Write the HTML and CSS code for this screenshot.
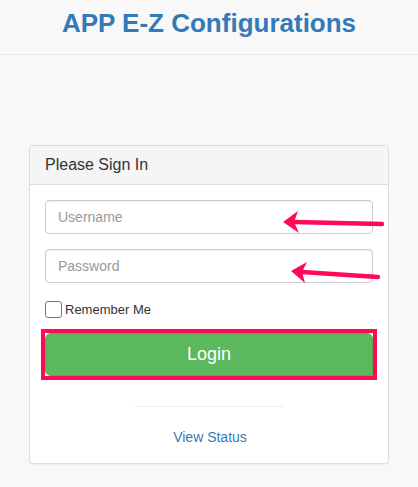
FILE: index.html
```html
<!DOCTYPE html>
<html>
<head>
<meta charset="utf-8">
<link rel="stylesheet" href="styles.css">
</head>
<body>
<header class="navbar">
  <h1 class="brand">APP E-Z Configurations</h1>
</header>
<main class="main">
  <div class="panel">
    <div class="panel-heading">
      <h3 class="panel-title">Please Sign In</h3>
    </div>
    <div class="panel-body">
      <div class="form-group"><input class="form-control" type="text" placeholder="Username"></div>
      <div class="form-group"><input class="form-control" type="password" placeholder="Password"></div>
      <label class="remember"><span class="checkbox"></span>Remember Me</label>
      <div class="highlight"><button class="btn-login" type="button">Login</button></div>
      <hr class="divider">
      <div class="status"><a href="#">View Status</a></div>
    </div>
  </div>
</main>
<svg class="annotations" width="418" height="487" viewBox="0 0 418 487">
  <line x1="382" y1="224" x2="294" y2="222" stroke="#ff0a55" stroke-width="4.5" stroke-linecap="round"/>
  <polygon points="283,222 298,211 294,222 299,233" fill="#ff0a55"/>
  <line x1="378" y1="277" x2="302" y2="272" stroke="#ff0a55" stroke-width="4.5" stroke-linecap="round"/>
  <polygon points="291,271 307,262 302,272 305,283" fill="#ff0a55"/>
</svg>
</body>
</html>
```
FILE: styles.css
```css
* { box-sizing: border-box; }
html, body { margin: 0; padding: 0; }
body {
  background: #f8f8f8;
  font-family: "Liberation Sans", Arial, sans-serif;
  font-size: 14px;
  color: #333;
  width: 418px;
  height: 487px;
  overflow: hidden;
  position: relative;
}
.navbar {
  height: 55px;
  border-bottom: 1px solid #e7e7e7;
  display: flex;
  justify-content: center;
}
.brand {
  margin: 7px 0 0;
  font-size: 26px;
  font-weight: bold;
  line-height: 32px;
  color: #337ab7;
}
.main {
  padding: 90px 0 0 29px;
}
.panel {
  width: 360px;
  background: #fff;
  border: 1px solid #ddd;
  border-radius: 4px;
  box-shadow: 0 1px 1px rgba(0,0,0,.05);
}
.panel-heading {
  background: #f5f5f5;
  border-bottom: 1px solid #ddd;
  border-radius: 3px 3px 0 0;
  padding: 10px 15px;
}
.panel-title {
  margin: 0;
  font-size: 16px;
  font-weight: normal;
  line-height: 17.6px;
}
.panel-body {
  padding: 15px 15px 16px;
}
.form-group { margin-bottom: 15px; }
.form-control {
  display: block;
  width: 328px;
  height: 34px;
  padding: 6px 12px;
  font-family: inherit;
  font-size: 14px;
  color: #555;
  background: #fff;
  border: 1px solid #ccc;
  border-radius: 4px;
  box-shadow: inset 0 1px 1px rgba(0,0,0,.075);
}
.form-control::placeholder { color: #999; }
.remember {
  display: flex;
  align-items: center;
  height: 21px;
  padding-top: 3px;
  font-size: 13px;
  color: #333;
}
.checkbox {
  width: 17px;
  height: 17px;
  border: 1px solid #767676;
  border-radius: 3px;
  background: #fff;
  margin-right: 3px;
}
.highlight {
  width: 336px;
  margin: 10px 0 0 -4px;
  border: 4px solid #ff0a55;
}
.btn-login {
  display: block;
  width: 328px;
  height: 43px;
  background: #5cb85c;
  border: 1px solid #4cae4c;
  border-radius: 6px 6px 0 6px;
  color: #fff;
  font-family: inherit;
  font-size: 18px;
  line-height: 24px;
}
.divider {
  width: 149px;
  margin: 26px auto 0;
  border: 0;
  border-top: 1px solid #eee;
}
.status {
  text-align: center;
  margin-top: 20px;
  padding-left: 2px;
  line-height: 20px;
}
.status a {
  color: #337ab7;
  text-decoration: none;
}
.annotations {
  position: absolute;
  left: 0;
  top: 0;
  pointer-events: none;
}
```
